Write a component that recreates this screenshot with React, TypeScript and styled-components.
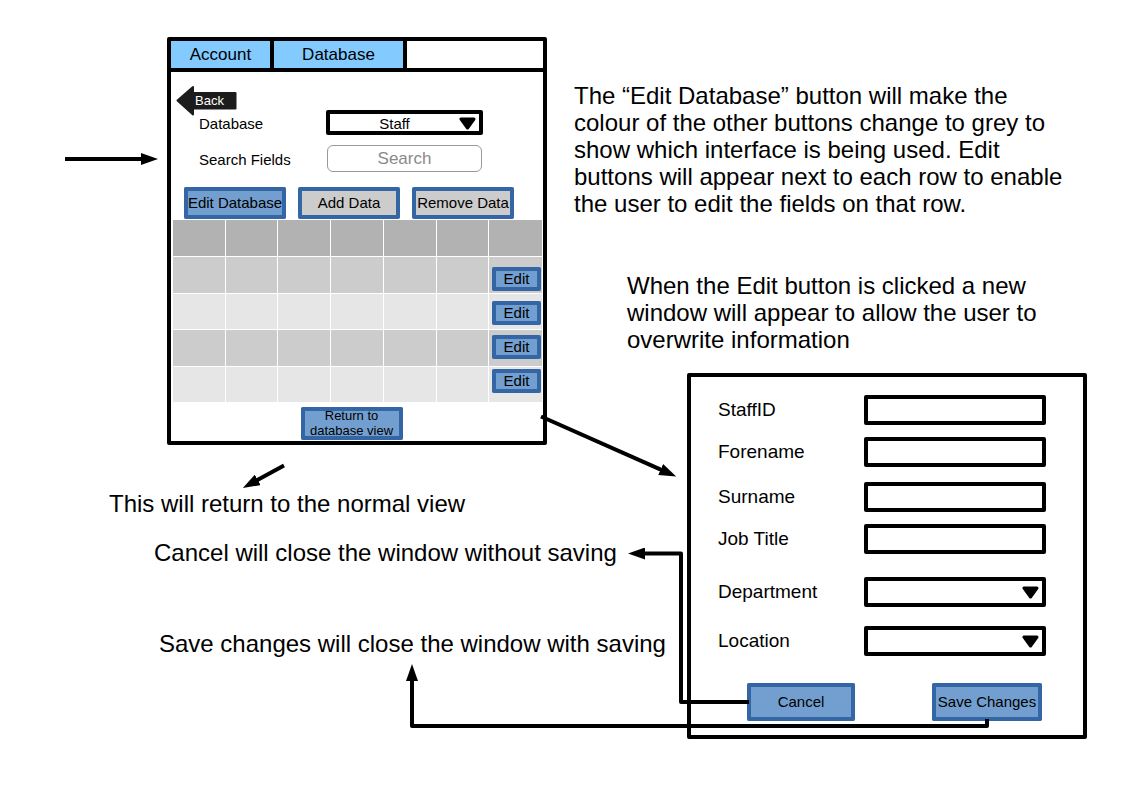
import React from 'react';
import styled, { createGlobalStyle } from 'styled-components';

const GlobalStyle = createGlobalStyle`
  * { box-sizing: border-box; }
  body {
    margin: 0;
    background: #fff;
    color: #000;
    font-family: "Liberation Sans", Arial, sans-serif;
  }
  button, input, select { font-family: inherit; color: inherit; }
`;

/* The board is a free canvas: windows, notes and connectors are pinned to it. */
const Board = styled.main`
  position: relative;
  min-height: 100vh;
`;

const Pin = styled.div<{ $x: number; $y: number; $w?: number }>`
  position: absolute;
  left: ${p => p.$x}px;
  top: ${p => p.$y}px;
  ${p => (p.$w ? `width: ${p.$w}px;` : 'white-space: nowrap;')}
`;

const Note = styled.p`
  margin: 0;
  font-size: 24px;
  line-height: 27px;
`;

const Window = styled.section`
  border: 4px solid #000;
  border-radius: 2px;
  background: #fff;
`;

const Tabs = styled.nav`
  display: grid;
  grid-template-columns: 103px 133px 1fr;
  height: 31px;
  border-bottom: 4px solid #000;
`;

const Tab = styled.button`
  border: 0;
  border-right: 4px solid #000;
  padding: 0;
  background: #83caff;
  font-size: 17px;
  line-height: 20px;
`;

const Body = styled.div`
  display: flex;
  flex-direction: column;
  padding: 13px 1px 1px 2px;
`;

const BackButton = styled.button`
  display: grid;
  align-self: flex-start;
  width: 61px;
  height: 31px;
  margin: 0 0 -6px 3px;
  border: 0;
  padding: 0;
  background: none;
  color: #fff;
  font-size: 13px;
  line-height: 31px;
  text-align: left;

  & > * { grid-area: 1 / 1; }
  & > span { padding-left: 19px; }
`;

const Filters = styled.div`
  display: grid;
  grid-template-columns: 127px 157px;
  row-gap: 10px;
  align-items: center;
  padding-left: 26px;
`;

const FilterLabel = styled.label`
  padding-top: 3px;
  font-size: 15px;
  line-height: 22px;
`;

const SelectBox = styled.div`
  position: relative;
`;

const CaretSlot = styled.span`
  position: absolute;
  top: 1px;
  right: 7px;
  bottom: 0;
  display: flex;
  align-items: center;
  pointer-events: none;
`;

const SelectControl = styled.select<{ $h: number }>`
  display: block;
  appearance: none;
  width: 100%;
  height: ${p => p.$h}px;
  border: 4px solid #000;
  border-radius: 2px;
  padding: 1px 20px 0 0;
  background: #fff;
  font-size: 15px;
  text-align: center;
  text-align-last: center;
`;

const SearchInput = styled.input`
  height: 27px;
  margin: 0 1px;
  min-width: 0;
  border: 1px solid #999;
  border-radius: 6px;
  padding: 0;
  font-size: 17px;
  text-align: center;

  &::placeholder { color: #8a8a8a; opacity: 1; }
`;

const Modes = styled.div`
  display: flex;
  gap: 12px;
  margin: 15px 0 1px;
  padding-left: 11px;
`;

const Button = styled.button<{ $w: number; $h: number; $muted?: boolean; $small?: boolean }>`
  flex: none;
  width: ${p => p.$w}px;
  height: ${p => p.$h}px;
  border: 0;
  border-radius: 2px;
  padding: 0 0 2px;
  background: ${p => (p.$muted ? '#ccc' : '#729fcf')};
  box-shadow: inset 0 0 0 4px #3465a4;
  font-size: ${p => (p.$small ? 13 : 15)}px;
  line-height: 15px;
  white-space: ${p => (p.$small ? 'normal' : 'nowrap')};
`;

const GridArea = styled.div`
  position: relative;
`;

const DataTable = styled.table`
  width: 100%;
  height: 183px;
  border-spacing: 0;
  table-layout: fixed;

  th, td {
    height: 36px;
    padding: 0;
    border-right: 1px solid #fff;
    border-bottom: 1px solid #fff;
  }
  th { height: 37px; background: #b2b2b2; }
  td { background: #ccc; }
  tbody tr:nth-child(even) td { background: #e6e6e6; }
  th:last-child, td:last-child { border-right: 0; }
`;

/* Floats over the last table column while edit mode is on. */
const RowActions = styled.div`
  position: absolute;
  top: 47px;
  right: 1px;
  display: flex;
  flex-direction: column;
  gap: 10px;
`;

const Footer = styled.div`
  display: flex;
  justify-content: center;
  padding: 4px 12px 0 0;
`;

const Form = styled.form`
  padding: 18px 38px 14px 27px;
`;

const Fields = styled.div`
  display: grid;
  grid-template-columns: 146px 182px;
  grid-template-rows: 42px 45px 42px 53px 49px 57px;
`;

const FieldLabel = styled.label`
  font-size: 19px;
  line-height: 30px;
`;

const TextInput = styled.input`
  width: 100%;
  height: 30px;
  border: 4px solid #000;
  border-radius: 2px;
  padding: 0 4px;
  background: #fff;
  font-size: 15px;
`;

const FormActions = styled.div`
  display: flex;
  justify-content: space-between;
  padding: 0 3px 0 29px;
`;

const Connectors = styled.svg`
  position: absolute;
  inset: 0;
  width: 100%;
  height: 100%;
  overflow: visible;
  pointer-events: none;
`;

interface DropDownProps {
  id: string;
  height: number;
  options?: string[];
}

function DropDown({ id, height, options = [] }: DropDownProps) {
  return (
    <div>
      <SelectBox>
        <SelectControl id={id} $h={height}>
          {options.map(o => <option key={o}>{o}</option>)}
        </SelectControl>
        <CaretSlot>
          <svg width="17" height="13" viewBox="0 0 17 13" aria-hidden="true">
            <path d="M2 2H15L8.500 11Z" stroke="#000" strokeWidth="3" strokeLinejoin="round" />
          </svg>
        </CaretSlot>
      </SelectBox>
    </div>
  );
}

const columns = [1, 2, 3, 4, 5, 6, 7];
const rows = [1, 2, 3, 4];

const fields = [
  { id: 'staff-id', label: 'StaffID' },
  { id: 'forename', label: 'Forename' },
  { id: 'surname', label: 'Surname' },
  { id: 'job-title', label: 'Job Title' },
  { id: 'department', label: 'Department', choice: true },
  { id: 'location', label: 'Location', choice: true },
];

function DatabaseWindow() {
  return (
    <Window>
      <Tabs>
        <Tab type="button">Account</Tab>
        <Tab type="button">Database</Tab>
      </Tabs>
      <Body>
        <BackButton type="button">
          <svg width="61" height="31" viewBox="0 0 61 31" aria-hidden="true">
            <path
              d="M1.500 15.500L17 2V8H59.500V23.500H17V29.500Z"
              fill="#1c1c1c"
              stroke="#1c1c1c"
              strokeWidth="2"
              strokeLinejoin="round"
            />
          </svg>
          <span>Back</span>
        </BackButton>
        <Filters>
          <FilterLabel htmlFor="database">Database</FilterLabel>
          <DropDown id="database" height={25} options={['Staff']} />
          <FilterLabel htmlFor="search">Search Fields</FilterLabel>
          <SearchInput id="search" placeholder="Search" />
        </Filters>
        <Modes>
          <Button type="button" $w={102} $h={32}>Edit Database</Button>
          <Button type="button" $w={102} $h={32} $muted>Add Data</Button>
          <Button type="button" $w={102} $h={32} $muted>Remove Data</Button>
        </Modes>
        <GridArea>
          <DataTable>
            <thead>
              <tr>{columns.map(c => <th key={c} />)}</tr>
            </thead>
            <tbody>
              {rows.map(r => (
                <tr key={r}>{columns.map(c => <td key={c} />)}</tr>
              ))}
            </tbody>
          </DataTable>
          <RowActions>
            {rows.map(r => (
              <Button key={r} type="button" $w={49} $h={24}>Edit</Button>
            ))}
          </RowActions>
        </GridArea>
        <Footer>
          <Button type="button" $w={102} $h={33} $small>Return to database view</Button>
        </Footer>
      </Body>
    </Window>
  );
}

function EditWindow() {
  return (
    <Window>
      <Form onSubmit={e => e.preventDefault()}>
        <Fields>
          {fields.map(f => (
            <React.Fragment key={f.id}>
              <FieldLabel htmlFor={f.id}>{f.label}</FieldLabel>
              {f.choice ? (
                <DropDown id={f.id} height={30} />
              ) : (
                <TextInput id={f.id} type="text" />
              )}
            </React.Fragment>
          ))}
        </Fields>
        <FormActions>
          <Button type="button" $w={108} $h={38}>Cancel</Button>
          <Button type="submit" $w={110} $h={38}>Save Changes</Button>
        </FormActions>
      </Form>
    </Window>
  );
}

export default function App() {
  return (
    <>
      <GlobalStyle />
      <Board>
        <Pin $x={167} $y={37} $w={380}><DatabaseWindow /></Pin>
        <Pin $x={687} $y={373} $w={400}><EditWindow /></Pin>

        <Pin $x={574} $y={82} $w={500}>
          <Note>
            The “Edit Database” button will make the colour of the other buttons change to grey to
            show which interface is being used. Edit buttons will appear next to each row to enable
            the user to edit the fields on that row.
          </Note>
        </Pin>
        <Pin $x={627} $y={272} $w={430}>
          <Note>
            When the Edit button is clicked a new window will appear to allow the user to overwrite
            information
          </Note>
        </Pin>
        <Pin $x={109} $y={490}><Note>This will return to the normal view</Note></Pin>
        <Pin $x={154} $y={539}><Note>Cancel will close the window without saving</Note></Pin>
        <Pin $x={159} $y={630}><Note>Save changes will close the window with saving</Note></Pin>

        <Connectors aria-hidden="true">
          <defs>
            <marker
              id="head"
              markerUnits="userSpaceOnUse"
              markerWidth="17"
              markerHeight="12"
              refX="2"
              refY="6"
              orient="auto"
            >
              <path d="M0 0L17 6L0 12Z" />
            </marker>
          </defs>
          <g fill="none" stroke="#000" strokeWidth="4" strokeLinejoin="round">
            <path d="M65 159H143" markerEnd="url(#head)" />
            <path d="M541 416.500L662.500 470.400" markerEnd="url(#head)" />
            <path d="M284 465.500L256 480.800" markerEnd="url(#head)" />
            <path d="M749 702H681V553.500H643" markerEnd="url(#head)" />
            <path d="M987 719V726H412V679" markerEnd="url(#head)" />
          </g>
        </Connectors>
      </Board>
    </>
  );
}
